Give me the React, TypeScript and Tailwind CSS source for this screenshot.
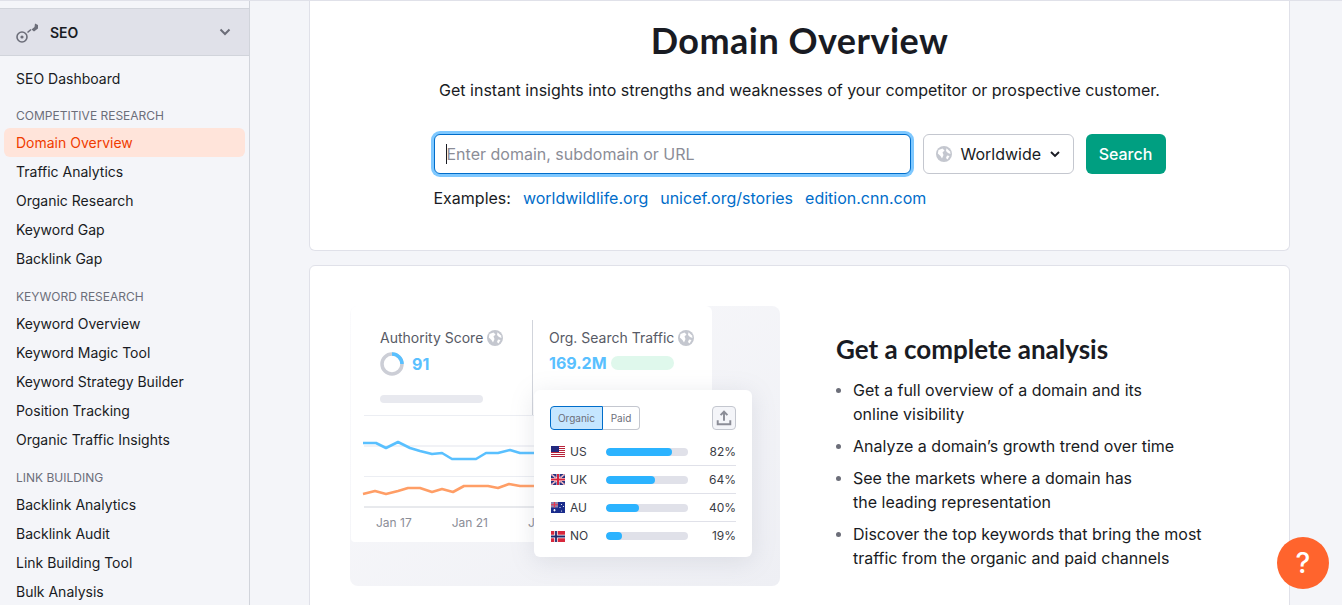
import React from "react";

const font = { fontFamily: "Inter, 'Liberation Sans', sans-serif" };

function Globe({ className }: { className: string }) {
  return (
    <svg viewBox="0 0 16 16" className={className}>
      <circle cx="8" cy="8" r="8" fill="#c4c7cf" />
      <path d="M2.5 4 L6.5 2.5 L8.5 4.5 L6.5 6.5 L7.5 9 L6 12.5 L4.5 10 L1.8 7.5 Z" fill="#fff" />
      <path d="M10.5 2.2 L14 5.5 L14.5 8 L12 7 L10 5 Z" fill="#fff" />
      <path d="M11 9.5 L13.5 10 L11.5 13.5 L10 12 Z" fill="#fff" />
    </svg>
  );
}

function KeyIcon() {
  return (
    <svg viewBox="0 0 24 24" className="h-6 w-6 shrink-0" fill="none">
      <circle cx="6" cy="17" r="5" stroke="#6c6e79" strokeWidth="1.6" />
      <circle cx="6" cy="17" r="1.6" fill="#6c6e79" />
      <path d="M11.5 12.5 L15 9.5" stroke="#6c6e79" strokeWidth="1.6" />
      <path d="M15.5 9.5 L18.5 7 L19 3.5 L22 5 L22 8.5 L18 11.5 Z" fill="#6c6e79" />
    </svg>
  );
}

const Flag = ({ c }: { c: string }) => {
  if (c === "US")
    return (
      <svg viewBox="0 0 14 11" className="h-[11px] w-[14px] shrink-0">
        <rect width="14" height="11" fill="#fff" />
        {[0, 2, 4, 6, 8, 10].map((y) => (
          <rect key={y} y={y} width="14" height="1" fill="#b8233a" />
        ))}
        <rect width="8" height="6" fill="#23297e" />
      </svg>
    );
  if (c === "UK")
    return (
      <svg viewBox="0 0 14 11" className="h-[11px] w-[14px] shrink-0">
        <rect width="14" height="11" fill="#27317f" />
        <path d="M0 0 L14 11 M14 0 L0 11" stroke="#fff" strokeWidth="1.4" />
        <path d="M0 0 L14 11 M14 0 L0 11" stroke="#d6304a" strokeWidth="0.6" />
        <path d="M7 0 V11 M0 5.5 H14" stroke="#fff" strokeWidth="3" />
        <path d="M7 0 V11 M0 5.5 H14" stroke="#d6243c" strokeWidth="2" />
      </svg>
    );
  if (c === "AU")
    return (
      <svg viewBox="0 0 14 11" className="h-[11px] w-[14px] shrink-0">
        <rect width="14" height="11" fill="#1a2c8c" />
        <rect width="7" height="5.5" fill="#8f86ad" />
        <path d="M3.5 0 V5.5 M0 2.75 H7" stroke="#e8364e" strokeWidth="1.2" />
        <path d="M3.5 7 v2.4 M2.3 8.2 h2.4" stroke="#fff" strokeWidth="0.9" />
        <circle cx="10.5" cy="2.5" r="0.6" fill="#fff" />
        <circle cx="12.5" cy="4.5" r="0.6" fill="#fff" />
        <circle cx="9" cy="5.5" r="0.6" fill="#fff" />
        <circle cx="10.5" cy="9" r="0.6" fill="#fff" />
      </svg>
    );
  return (
    <svg viewBox="0 0 14 11" className="h-[11px] w-[14px] shrink-0">
      <rect width="14" height="11" fill="#d8283c" />
      <path d="M5 0 V11 M0 5.5 H14" stroke="#fff" strokeWidth="3.4" />
      <path d="M5 0 V11 M0 5.5 H14" stroke="#1f2a6c" strokeWidth="1.8" />
    </svg>
  );
};

function Item({ label, active }: { label: string; active?: boolean }) {
  return (
    <div
      className={
        active
          ? "mx-1 flex h-[29px] shrink-0 items-center rounded-md bg-[#ffe4da] px-3 text-[14px] text-[#f03c00]"
          : "mx-1 flex h-[29px] shrink-0 items-center px-3 text-[14px] text-[#191b23]"
      }
    >
      {label}
    </div>
  );
}

function Label({ title }: { title: string }) {
  return <div className="flex h-[36px] shrink-0 items-end px-4 pb-[4px] text-[12px] leading-[16px] text-[#6c6e79]">{title}</div>;
}

function Group({ title, items }: { title: string; items: string[] }) {
  return (
    <>
      <Label title={title} />
      {items.map((i) => (
        <Item key={i} label={i} />
      ))}
    </>
  );
}

function Sidebar() {
  return (
    <aside className="flex h-[605px] w-[250px] shrink-0 flex-col overflow-hidden border-r border-[#d1d4db] bg-[#f4f5f9]">
      <div className="mt-[8px] flex h-[48px] shrink-0 items-center border-y border-[#d1d4db] bg-[#e0e1e9] pl-4 pr-[18px]">
        <KeyIcon />
        <span className="ml-[10px] flex-1 text-[14px] font-semibold text-[#191b23]">SEO</span>
        <svg viewBox="0 0 12 8" className="h-[8px] w-[12px]" fill="none">
          <path d="M1.5 1.5 L6 6 L10.5 1.5" stroke="#6c6e79" strokeWidth="2" />
        </svg>
      </div>
      <div className="mt-[8px] -mb-px flex shrink-0 flex-col">
        <Item label="SEO Dashboard" />
      </div>
      <Label title="COMPETITIVE RESEARCH" />
      <Item label="Domain Overview" active />
      <Item label="Traffic Analytics" />
      <Item label="Organic Research" />
      <Item label="Keyword Gap" />
      <Item label="Backlink Gap" />
      <Group
        title="KEYWORD RESEARCH"
        items={["Keyword Overview", "Keyword Magic Tool", "Keyword Strategy Builder", "Position Tracking", "Organic Traffic Insights"]}
      />
      <Group title="LINK BUILDING" items={["Backlink Analytics", "Backlink Audit", "Link Building Tool", "Bulk Analysis"]} />
    </aside>
  );
}

function SearchCard() {
  return (
    <section className="flex h-[251px] shrink-0 flex-col items-center rounded-b-md border border-t-0 border-[#e0e1e9] bg-white">
      <h1 className="mt-[16px] text-[36px] font-bold leading-[48px] tracking-[0.47px] text-[#191b23]" style={{ fontFamily: "Lato, sans-serif" }}>
        Domain Overview
      </h1>
      <p className="mt-[14px] text-[16px] leading-[24px] text-[#191b23]">
        Get instant insights into strengths and weaknesses of your competitor or prospective customer.
      </p>
      <div className="mt-[32px] flex w-[732px] gap-3">
        <div className="flex h-[40px] w-[477px] items-center rounded-md border border-[#006dca] bg-white pl-[11px] pr-3 text-[16px] text-[#8b8d97] shadow-[0_0_0_3px_#7ec8ff]">
          <span className="h-[20px] w-px bg-[#191b23]" />
          Enter domain, subdomain or URL
        </div>
        <div className="flex h-[40px] w-[151px] items-center rounded-md border border-[#c4c7cf] bg-white pl-3 text-[16px] text-[#191b23]">
          <Globe className="h-4 w-4" />
          <span className="ml-[9px]">Worldwide</span>
          <svg viewBox="0 0 10 7" className="ml-[9px] h-[7px] w-[10px]" fill="none">
            <path d="M1 1 L5 5 L9 1" stroke="#191b23" strokeWidth="1.9" />
          </svg>
        </div>
        <div className="flex h-[40px] w-[80px] items-center justify-center rounded-md bg-[#009f81] text-[16px] font-medium text-white">
          Search
        </div>
      </div>
      <div className="mt-[12px] flex w-[732px] text-[16px] leading-[24px]">
        <span className="mr-[12px] text-[#191b23]">Examples:</span>
        <div className="flex gap-3 text-[#006dca]">
          <span>worldwildlife.org</span>
          <span>unicef.org/stories</span>
          <span>edition.cnn.com</span>
        </div>
      </div>
    </section>
  );
}

const rows = [
  { c: "US", v: 82, w: 80 },
  { c: "UK", v: 64, w: 60 },
  { c: "AU", v: 40, w: 40 },
  { c: "NO", v: 19, w: 20 },
];

function Popup() {
  return (
    <div className="absolute left-[184px] top-[84px] w-[218px] rounded-md bg-white px-4 pb-[7px] pt-4 shadow-[0_4px_24px_rgba(120,125,150,0.18)]">
      <div className="flex items-center justify-between">
        <div className="flex h-[24px] text-[10px] text-[#6c6e79]">
          <span className="flex w-[53px] items-center justify-center rounded-l-[4px] border border-[#006dca] bg-[#c5e6ff]">Organic</span>
          <span className="flex w-[37px] items-center justify-center rounded-r-[4px] border border-l-0 border-[#c4c7cf]">Paid</span>
        </div>
        <div className="flex h-[24px] w-[24px] items-center justify-center rounded-[4px] border border-[#c4c7cf] bg-[#f4f5f9]">
          <svg viewBox="0 0 14 14" className="h-[16px] w-[16px]" fill="none">
            <path d="M7 9.5 V2 M4 4.5 L7 1.5 L10 4.5" stroke="#8b8d97" strokeWidth="1.7" />
            <path d="M1.5 9 V12.5 H12.5 V9" stroke="#8b8d97" strokeWidth="1.7" />
          </svg>
        </div>
      </div>
      <div className="mt-[8px]">
        {rows.map((r, i) => (
          <div
            key={r.c}
            className={
              i < 3
                ? "flex h-[28px] items-center border-b border-[#e0e1e9] pl-px text-[12px] text-[#3a3c45]"
                : "flex h-[28px] items-center pl-px text-[12px] text-[#3a3c45]"
            }
          >
            <Flag c={r.c} />
            <span className="ml-[5px] w-[36px]">{r.c}</span>
            <div className="h-[8px] w-[82px] overflow-hidden rounded bg-[#e0e1e9]">
              <div className="h-full rounded bg-[#2bb3ff]" style={{ width: `${r.w}%` }} />
            </div>
            <span className="ml-auto">{r.v}%</span>
          </div>
        ))}
      </div>
    </div>
  );
}

const pts = (a: number[][]) => a.map(([x, y]) => `${x - 351},${y - 415}`).join(" ");

function Illustration() {
  return (
    <div className="relative h-[280px] w-[430px] shrink-0 rounded-lg bg-gradient-to-br from-[#fafafc] to-[#eeeff4]">
      <div className="ml-px flex h-[236px] w-[361px] flex-col rounded-t-md rounded-bl-sm bg-white">
        <div className="flex h-[109px] shrink-0">
          <div className="w-[181px] shrink-0 pl-[29px] pt-[21px]">
            <div className="flex items-center gap-1 text-[14px] leading-[22px] text-[#575a65]">
              Authority Score <Globe className="h-4 w-4" />
            </div>
            <div className="mt-[3px] flex items-center gap-[8px]">
              <svg viewBox="0 0 24 24" className="h-6 w-6">
                <circle cx="12" cy="12" r="10" fill="none" stroke="#ccced6" strokeWidth="3.5" />
                <path d="M12 2 A10 10 0 0 1 22 12" fill="none" stroke="#59c0ff" strokeWidth="3.5" />
              </svg>
              <span className="text-[16px] font-bold text-[#59c0ff]">91</span>
            </div>
            <div className="mt-[19px] h-[8px] w-[103px] rounded bg-[#e8e9ef]" />
          </div>
          <div className="mt-[14px] w-px bg-[#d1d4db]" />
          <div className="pl-[16px] pt-[21px]">
            <div className="flex items-center gap-1 whitespace-nowrap text-[14px] leading-[22px] text-[#575a65]">
              Org. Search Traffic <Globe className="h-4 w-4" />
            </div>
            <div className="mt-[2px] flex items-center gap-[4px]">
              <span className="text-[16px] font-bold text-[#59c0ff]">169.2M</span>
              <div className="h-[14px] w-[63px] rounded-full bg-[#dff8ec]" />
            </div>
          </div>
        </div>
        <svg viewBox="0 0 361 100" className="h-[100px] w-[361px]" fill="none">
          <path d="M13 0.5 H361 M13 61.5 H361" stroke="#eceef3" strokeWidth="1" />
          <path d="M13 31 H361" stroke="#eceef3" strokeWidth="1.5" />
          <path d="M13 92 H361" stroke="#d1d4db" strokeWidth="1" />
          <polyline
            points={pts([[363,443],[376,443],[386,448],[398,442],[410,448],[420,451],[432,454],[442,453],[452,459],[476,459],[486,453],[498,453],[510,450],[520,453],[534,453]])}
            stroke="#59c0ff"
            strokeWidth="2.6"
            strokeLinejoin="round"
          />
          <polyline
            points={pts([[363,494],[375,491],[386,494],[398,491],[408,488],[420,488],[432,492],[442,489],[453,492],[464,486],[488,486],[498,488],[509,484],[520,486],[534,486]])}
            stroke="#ff9e66"
            strokeWidth="2.6"
            strokeLinejoin="round"
          />
        </svg>
        <div className="flex gap-[40px] pl-[25px] text-[12px] leading-[16px] text-[#8b8d97]">
          <span>Jan 17</span>
          <span>Jan 21</span>
          <span>Jan 25</span>
        </div>
      </div>
      <Popup />
    </div>
  );
}

function AnalysisCard() {
  const list = [
    ["Get a full overview of a domain and its", "online visibility"],
    ["Analyze a domain’s growth trend over time"],
    ["See the markets where a domain has", "the leading representation"],
    ["Discover the top keywords that bring the most", "traffic from the organic and paid channels"],
  ];
  return (
    <section className="mt-[14px] flex shrink-0 gap-[56px] rounded-t-md border border-[#e0e1e9] bg-white pb-10 pl-[40px] pt-[40px]">
      <Illustration />
      <div className="pt-[27px]">
        <h2 className="whitespace-nowrap text-[26px] font-bold leading-[32px] text-[#191b23]" style={{ fontFamily: "Lato, sans-serif" }}>
          Get a complete analysis
        </h2>
        <ul className="mt-[13px] flex flex-col gap-2 text-[16px] leading-[24px] text-[#191b23]">
          {list.map((l) => (
            <li key={l[0]} className="flex">
              <span className="mt-[10px] h-[5px] w-[5px] shrink-0 rounded-full bg-[#6c6e79]" />
              <span className="ml-[12px] whitespace-nowrap">
                {l.map((t) => (
                  <span key={t} className="block">{t}</span>
                ))}
              </span>
            </li>
          ))}
        </ul>
      </div>
    </section>
  );
}

export default function App() {
  return (
    <div className="relative flex h-[605px] w-[1342px] overflow-hidden bg-[#f4f5f9]" style={font}>
      <div className="absolute inset-x-0 top-0 z-10 h-px bg-[#e0e1e9]" />
      <Sidebar />
      <main className="flex h-[605px] flex-1 flex-col overflow-hidden pl-[59px] pr-[52px]">
        <SearchCard />
        <AnalysisCard />
      </main>
      <div className="absolute left-[1277px] top-[537px] flex h-[52px] w-[52px] items-center justify-center rounded-full bg-[#ff642d] text-[28px] font-medium text-white">
        ?
      </div>
    </div>
  );
}
